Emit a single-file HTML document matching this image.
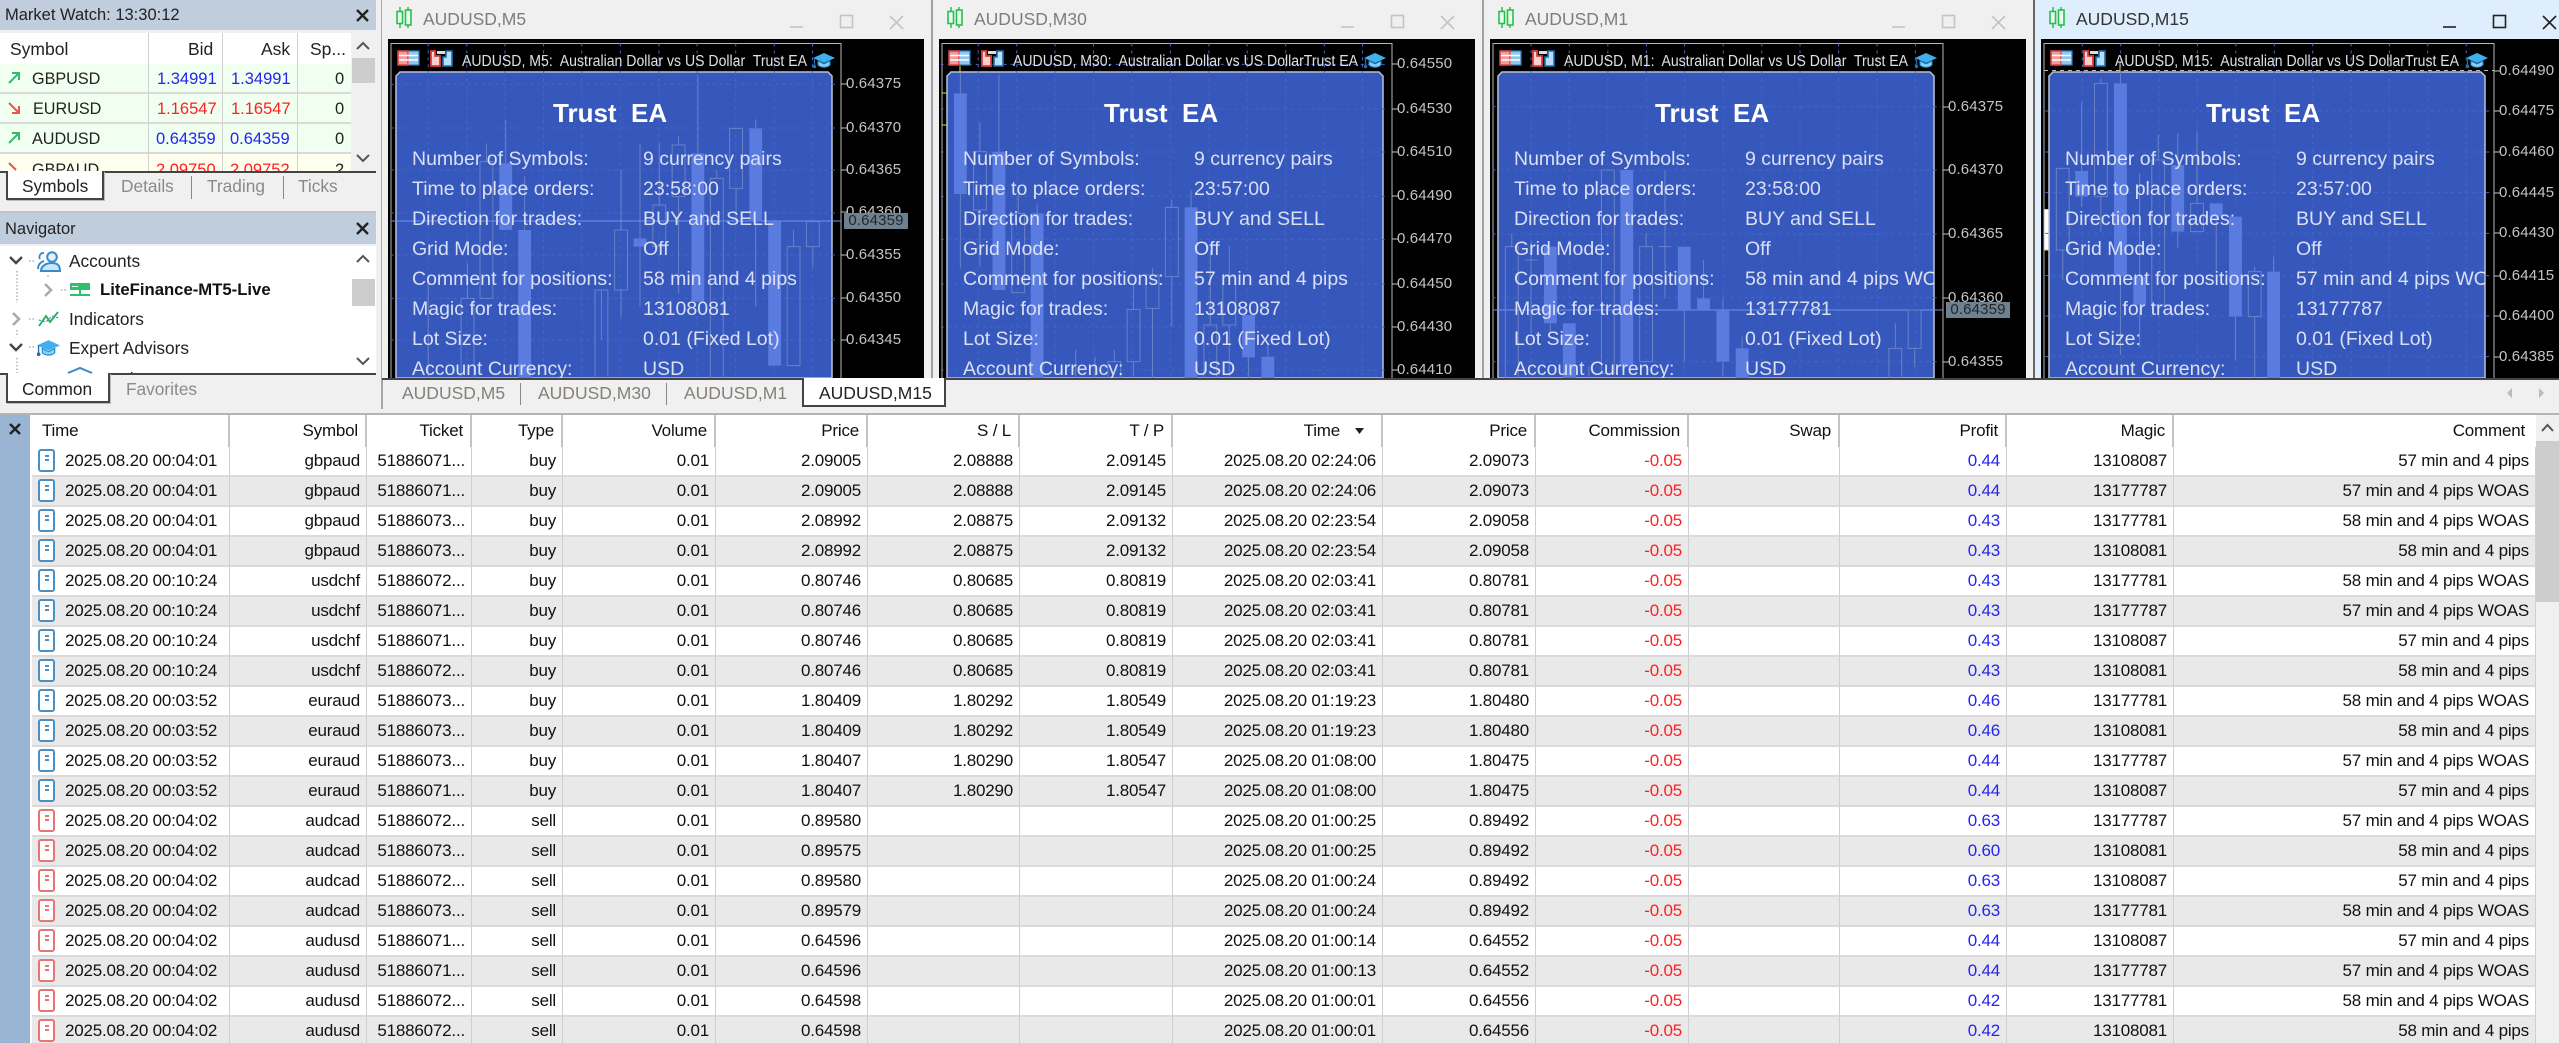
<!DOCTYPE html>
<html><head><meta charset="utf-8"><title>MT5</title>
<style>
*{box-sizing:border-box}
html{background:#f0f0f0}
html,body{margin:0;padding:0;width:2559px;height:1043px;overflow:hidden;font-family:"Liberation Sans",sans-serif;color:#222}
body{background:#f0f0f0;filter:blur(.35px)}
.t{position:absolute;white-space:pre;line-height:20px}
.a{position:absolute}
.tb{background:#bfcddc;left:0;width:376px}
.g1{color:#8a8a8a}
.win{position:absolute;top:0;height:378px;width:549px;overflow:hidden;background:#f0f0f0}
.win .ttl{position:absolute;left:41px;top:9px;font-size:17.5px;line-height:20px;color:#7d7d7d;white-space:pre}
.chart{position:absolute;left:6px;top:39px;width:536px;height:339px;background:#000}
.win svg.c{position:absolute;left:0;top:0}
.tx{position:absolute;left:14px;top:72px;width:436px;height:306px;overflow:hidden;color:#d9e0f3;font-size:19.5px;line-height:24px;white-space:pre}
.tx b{position:absolute;left:157px;top:26px;font-size:26px;line-height:30px;color:#fff}
.tx span{position:absolute}
.l{left:16px}.v{left:247px}
.ax{position:absolute;left:464px;font-size:15px;line-height:18px;color:#c4c4c4;letter-spacing:.15px}
.pb{position:absolute;left:462px;width:64px;height:16px;background:#6f808f;color:#1f262c;font-size:15px;line-height:16px;text-align:center;letter-spacing:.15px}
.vl{position:absolute;top:0;width:2px;height:378px;background:#a0a0a0}
.tbt{position:absolute;top:383px;font-size:17.5px;line-height:20px;color:#85807a;white-space:pre}
table{position:absolute;left:32px;border-collapse:separate;border-spacing:0;table-layout:fixed;width:2504px;font-size:17px;letter-spacing:-.2px;color:#111}
td,th{height:30px;padding:0 6px 0 0;text-align:right;white-space:nowrap;overflow:hidden;border-right:1px solid #cfcfcf;border-bottom:2px solid #dadada;font-weight:normal;line-height:28px;vertical-align:middle}
th{height:32px;padding-right:7px;border-right:2px solid #c4c4c4;border-bottom:0;line-height:32px;background:#fff}
tbody tr:nth-child(odd) td{background:#fff}
tbody tr:nth-child(even) td{background:#e9e9e9}
td.c0{text-align:left;padding-left:33px;position:relative}
i.d{position:absolute;left:6px;top:2px;width:17px;height:23px;border:2px solid #4a90c4;border-radius:3px;background:#fff}
i.d:after{content:"";position:absolute;left:5px;top:4px;width:4px;height:2px;background:#4a90c4;box-shadow:0 4px 0 #4a90c4}
i.r{border-color:#e87474}i.r:after{background:#e87474;box-shadow:0 4px 0 #e87474}
td.n{color:#ff2020}td.p{color:#2424ee}
.h{fill:none;stroke:#6a82c6;stroke-width:1;vector-effect:non-scaling-stroke}
.f{fill:#5a7be0}
.gd{fill:none;stroke:#4767c8;stroke-width:1;stroke-dasharray:3 4;vector-effect:non-scaling-stroke}
</style></head><body>
<svg width="0" height="0" style="position:absolute"><defs>
<symbol id="cd" viewBox="0 0 16 21"><path d="M4 0V21M12 0V21" stroke="#26c04c" stroke-width="1.5"/><rect x="1" y="4.5" width="5.5" height="12" fill="#eafff0" stroke="#26c04c" stroke-width="1.6"/><rect x="9.5" y="3" width="5.5" height="15" fill="#eafff0" stroke="#26c04c" stroke-width="1.6"/></symbol>
<symbol id="tbl" viewBox="0 0 23 16"><rect x="1" y="1" width="21" height="14" fill="#fff" stroke="#1f6fb0" stroke-width="1.4"/><rect x="1" y="1" width="10" height="14" fill="#f59a9a" stroke="#e03c3c" stroke-width="1.4"/><rect x="12" y="2" width="9" height="12" fill="#8cc8f0"/><path d="M2 5.5H21M2 10H21" stroke="#fff" stroke-width="1.5"/></symbol>
<symbol id="fl" viewBox="0 0 23 17"><path d="M1 1H5V6H10V16H1Z" fill="#fbd0d0" stroke="#e03c3c" stroke-width="1.8"/><rect x="7" y="1" width="8" height="3" fill="#ddd"/><path d="M16 1H22V16H13V7H16Z" fill="#b5e0fb" stroke="#1f6fb0" stroke-width="1.6"/></symbol>
<symbol id="hat" viewBox="0 0 22 17"><path d="M0 6L11 1L22 6L11 11Z" fill="#3fb0ec"/><path d="M5 9V13C8 16 14 16 17 13V9L11 12Z" fill="#8ad0f5" stroke="#1d86c8"/><path d="M1.500 6V13" stroke="#1d6fb0" stroke-width="1.300"/><circle cx="1.500" cy="14.500" r="1.800" fill="#1d6fb0"/></symbol>
<symbol id="mn" viewBox="0 0 16 16"><path d="M1 14H14" stroke="currentColor" stroke-width="1.600"/></symbol>
<symbol id="mx" viewBox="0 0 16 16"><rect x="1.500" y="1.500" width="12" height="12" fill="none" stroke="currentColor" stroke-width="1.600"/></symbol>
<symbol id="cl" viewBox="0 0 16 16"><path d="M1 1L14 14M14 1L1 14" stroke="currentColor" stroke-width="1.600"/></symbol>
</defs></svg>

<!-- Market Watch -->
<div class="a tb" style="top:0;height:30px"></div>
<div class="t" style="left:5px;top:5px;font-size:16.5px">Market Watch: 13:30:12</div>
<div class="a" style="left:0;top:33px;width:351px;height:31px;background:#fff"></div>
<div class="a" style="left:0;top:64px;width:351px;height:30px;background:#f1fff1;border-bottom:2px solid #dadada"></div>
<div class="a" style="left:0;top:94px;width:351px;height:30px;background:#f1fff1;border-bottom:2px solid #dadada"></div>
<div class="a" style="left:0;top:124px;width:351px;height:30px;background:#f1fff1;border-bottom:2px solid #dadada"></div>
<div class="a" style="left:0;top:154px;width:351px;height:17px;background:#fffff0"></div>
<div class="a" style="left:148px;top:33px;width:1px;height:138px;background:#d0d0d0"></div>
<div class="a" style="left:222px;top:33px;width:1px;height:138px;background:#d0d0d0"></div>
<div class="a" style="left:297px;top:33px;width:1px;height:138px;background:#d0d0d0"></div>
<div class="t" style="left:10px;top:39px;font-size:17.5px">Symbol</div>
<div class="t" style="left:188px;top:39px;font-size:17.5px">Bid</div>
<div class="t" style="left:261px;top:39px;font-size:17.5px">Ask</div>
<div class="t" style="left:310px;top:39px;font-size:17.5px">Sp...</div>
<div class="t" style="left:32px;top:69px;font-size:16.2px">GBPUSD</div><div class="t" style="left:157px;top:69px;font-size:16.5px;color:#2424ee">1.34991</div><div class="t" style="left:231px;top:69px;font-size:16.5px;color:#2424ee">1.34991</div><div class="t" style="left:335px;top:69px;font-size:16.5px">0</div>
<div class="t" style="left:33px;top:99px;font-size:16.2px">EURUSD</div><div class="t" style="left:157px;top:99px;font-size:16.5px;color:#ff2020">1.16547</div><div class="t" style="left:231px;top:99px;font-size:16.5px;color:#ff2020">1.16547</div><div class="t" style="left:335px;top:99px;font-size:16.5px">0</div>
<div class="t" style="left:32px;top:129px;font-size:16.2px">AUDUSD</div><div class="t" style="left:156px;top:129px;font-size:16.5px;color:#2424ee">0.64359</div><div class="t" style="left:230px;top:129px;font-size:16.5px;color:#2424ee">0.64359</div><div class="t" style="left:335px;top:129px;font-size:16.5px">0</div>
<div class="a" style="left:0;top:154px;width:351px;height:17px;overflow:hidden">
<div class="t" style="left:32px;top:6px;font-size:16.2px">GBPAUD</div><div class="t" style="left:156px;top:6px;font-size:16.5px;color:#ff2020">2.09750</div><div class="t" style="left:230px;top:6px;font-size:16.5px;color:#ff2020">2.09752</div><div class="t" style="left:335px;top:6px;font-size:16.5px">2</div>
</div>
<div class="a" style="left:352px;top:58px;width:23px;height:25px;background:#cdcdcd"></div>
<div class="a" style="left:0;top:171px;width:376px;height:2px;background:#444"></div>
<div class="a" style="left:6px;top:171px;width:98px;height:29px;background:#fff;border:2px solid #444;border-top:0;box-shadow:1px 1px 0 #bbb"></div>
<div class="t" style="left:22px;top:176px;font-size:17.3px">Symbols</div>
<div class="t g1" style="left:121px;top:176px;font-size:17.3px">Details</div>
<div class="a" style="left:191px;top:176px;width:1px;height:23px;background:#888"></div>
<div class="t g1" style="left:207px;top:176px;font-size:17.3px">Trading</div>
<div class="a" style="left:283px;top:176px;width:1px;height:23px;background:#888"></div>
<div class="t g1" style="left:298px;top:176px;font-size:17.3px">Ticks</div>

<!-- Navigator -->
<div class="a" style="left:0;top:211px;width:376px;height:2px;background:#c4c4c4"></div>
<div class="a tb" style="top:213px;height:31px"></div>
<div class="t" style="left:5px;top:219px;font-size:16.5px">Navigator</div>
<div class="a" style="left:0;top:246px;width:376px;height:127px;background:#fff"></div>
<div class="t" style="left:69px;top:251px;font-size:17.3px">Accounts</div>
<div class="t" style="left:100px;top:280px;font-size:16.7px;font-weight:bold;color:#111">LiteFinance-MT5-Live</div>
<div class="t" style="left:69px;top:309px;font-size:17.3px">Indicators</div>
<div class="t" style="left:69px;top:338px;font-size:17.3px">Expert Advisors</div>
<div class="a" style="left:100px;top:366px;width:60px;height:7px;overflow:hidden"><div class="t" style="left:0;top:3px;font-size:17.3px">Market</div></div>
<div class="a" style="left:352px;top:279px;width:23px;height:27px;background:#cdcdcd"></div>
<div class="a" style="left:0;top:373px;width:376px;height:2px;background:#444"></div>
<div class="a" style="left:6px;top:373px;width:104px;height:30px;background:#fff;border:2px solid #444;border-top:0;box-shadow:1px 1px 0 #bbb"></div>
<div class="t" style="left:22px;top:379px;font-size:17.3px">Common</div>
<div class="t g1" style="left:126px;top:379px;font-size:17.3px">Favorites</div>

<svg class="a" style="left:0;top:0" width="381" height="410" fill="none">
<path d="M9 83L19 73M12 73H19V80" stroke="#35b870" stroke-width="2"/>
<path d="M9 103L19 113M19 106V113H12" stroke="#f05050" stroke-width="2"/>
<path d="M9 143L19 133M12 133H19V140" stroke="#35b870" stroke-width="2"/>
<path d="M9 163L16 170" stroke="#f05050" stroke-width="2"/>
<path d="M357 49L363 43L369 49M357 155L363 161L369 155" stroke="#555" stroke-width="2"/>
<path d="M357 262L363 256L369 262M357 358L363 364L369 358" stroke="#555" stroke-width="2"/>
<path d="M357 10L368 21M368 10L357 21M357 223L368 234M368 223L357 234" stroke="#222" stroke-width="2.400"/>
<path d="M10 257L16 263L22 257M10 344L16 350L22 344" stroke="#444" stroke-width="2.400"/>
<path d="M45 284L51 290L45 296" stroke="#aaa" stroke-width="2.600"/>
<path d="M13 313L19 319L13 325" stroke="#aaa" stroke-width="2.600"/>
<path d="M17 271V303M17 330V336M17 358V373M29 261H35M61 290H66M29 319H35M29 347H35M48 275V277" stroke="#888" stroke-dasharray="1.500 2"/>
<circle cx="52" cy="257" r="4.800" fill="#e4f0fa" stroke="#3a8ac8" stroke-width="2"/>
<path d="M40 259a4 4 0 0 1 4-6M38 269c0-5 3-7 6-8" stroke="#3a8ac8" stroke-width="1.800"/>
<path d="M41 271c0-5 5-8 11-8s8 3 8 8Z" fill="#cfe4f5" stroke="#3a8ac8" stroke-width="2"/>
<rect x="70" y="283" width="20" height="7" fill="#2ec06e"/><path d="M72 286.500H78" stroke="#fff"/>
<path d="M80 290V295M70 295H90" stroke="#2ec06e" stroke-width="2"/>
<path d="M39 326L46 316L50 322L58 312" stroke="#24b060" stroke-width="1.900"/>
<path d="M39 320L46 322L52 316L59 318" stroke="#3a8ac8" stroke-width="1.200" stroke-dasharray="2 2"/>
<use href="#hat" x="37" y="339" width="23" height="18"/>
<path d="M68 373L80 368L92 373" stroke="#3a8ac8" stroke-width="2"/>
</svg>
<div class="a" style="left:381px;top:0;width:2px;height:409px;background:#a8a8a8"></div>

<!-- Window 1 -->
<div class="win" style="left:382px"><div class="ttl">AUDUSD,M5</div>
<svg class="a" style="left:14px;top:7px" width="16" height="21"><use href="#cd"/></svg>
<svg class="a" style="left:407px;top:13px;color:#c4c4c4" width="16" height="16"><use href="#mn"/></svg>
<svg class="a" style="left:457px;top:14px;color:#c4c4c4" width="16" height="16"><use href="#mx"/></svg>
<svg class="a" style="left:507px;top:15px;color:#c4c4c4" width="16" height="16"><use href="#cl"/></svg>
<div class="chart"></div>
<svg class="c" width="549" height="378">
<path d="M14 378V76L18 72H446L450 76V378Z" fill="#3657bc" stroke="#b9c2d8" stroke-width="1.500"/>
<path d="M9 378V43.500H459V378" fill="none" stroke="#b8b8b8"/>
<g transform="translate(-2,0) scale(.35714,.33333)">
<path class="gd" d="M135 130V1135M243 130V1135M350 130V1135M458 130V1135M565 130V1135M673 130V1135M781 130V1135M888 130V1135M996 130V1135M1104 130V1135M1211 130V1135M30 253H1285M30 384H1285M30 510H1285M30 639H1285M30 765H1285M30 895H1285M30 1020H1285"/>
<path class="h" d="M245 790V895M298 430V485M352 360V490M405 530V690M620 1020V870M675 510V690M675 870V950M728 430V715M728 740V920M782 430V615M836 408V435M836 590V880M890 225V460M943 510V535M997 565V660M1052 358V385M1052 665V920M1158 690V740M1212 740V800M135 850V1135"/>
<path d="M30 663H1290" stroke="#6f92f2" stroke-width="1" vector-effect="non-scaling-stroke"/>
<rect class="h" x="227" y="895" width="36" height="240"/><rect class="h" x="280" y="485" width="36" height="410"/><rect class="f" x="334" y="490" width="36" height="200"/><rect class="f" x="387" y="690" width="36" height="445"/><rect class="h" x="602" y="870" width="36" height="265"/><rect class="h" x="657" y="690" width="36" height="180"/><rect class="f" x="710" y="715" width="36" height="25"/><rect class="h" x="764" y="615" width="36" height="125"/><rect class="h" x="818" y="435" width="36" height="155"/><rect class="f" x="872" y="460" width="36" height="445"/><rect class="h" x="925" y="535" width="36" height="600"/><rect class="h" x="979" y="385" width="36" height="180"/><rect class="f" x="1034" y="385" width="36" height="280"/><rect class="f" x="1087" y="665" width="36" height="432"/><rect class="h" x="1140" y="740" width="36" height="357"/><rect class="h" x="1194" y="665" width="36" height="75"/>
</g>
<path d="M459 84H466M459 128H466M459 170H466M459 212H466M459 255H466M459 298H466M459 340H466" stroke="#c4c4c4"/>
<use href="#tbl" x="15" y="50" width="23" height="16"/><use href="#fl" x="48" y="50" width="23" height="17"/><use href="#hat" x="431" y="52" width="22" height="17"/>
<text x="80" y="66" fill="#e0e0e0" font-size="15.5" textLength="345" lengthAdjust="spacingAndGlyphs" style="white-space:pre">AUDUSD, M5:  Australian Dollar vs US Dollar  Trust EA</text>
</svg>
<div class="tx"><b>Trust  EA</b>
<span class="l" style="top:75px">Number of Symbols:</span><span class="v" style="top:75px">9 currency pairs</span>
<span class="l" style="top:105px">Time to place orders:</span><span class="v" style="top:105px">23:58:00</span>
<span class="l" style="top:135px">Direction for trades:</span><span class="v" style="top:135px">BUY and SELL</span>
<span class="l" style="top:165px">Grid Mode:</span><span class="v" style="top:165px">Off</span>
<span class="l" style="top:195px">Comment for positions:</span><span class="v" style="top:195px">58 min and 4 pips</span>
<span class="l" style="top:225px">Magic for trades:</span><span class="v" style="top:225px">13108081</span>
<span class="l" style="top:255px">Lot Size:</span><span class="v" style="top:255px">0.01 (Fixed Lot)</span>
<span class="l" style="top:285px">Account Currency:</span><span class="v" style="top:285px">USD</span></div>
<div class="ax" style="top:75px">0.64375</div><div class="ax" style="top:119px">0.64370</div><div class="ax" style="top:161px">0.64365</div><div class="ax" style="top:203px">0.64360</div><div class="ax" style="top:246px">0.64355</div><div class="ax" style="top:289px">0.64350</div><div class="ax" style="top:331px">0.64345</div>
<div class="pb" style="top:213px">0.64359</div>
</div>

<!-- Window 2 -->
<div class="win" style="left:933px"><div class="ttl">AUDUSD,M30</div>
<svg class="a" style="left:14px;top:7px" width="16" height="21"><use href="#cd"/></svg>
<svg class="a" style="left:407px;top:13px;color:#c4c4c4" width="16" height="16"><use href="#mn"/></svg>
<svg class="a" style="left:457px;top:14px;color:#c4c4c4" width="16" height="16"><use href="#mx"/></svg>
<svg class="a" style="left:507px;top:15px;color:#c4c4c4" width="16" height="16"><use href="#cl"/></svg>
<div class="chart"></div>
<svg class="c" width="549" height="378">
<path d="M14 378V76L18 72H446L450 76V378Z" fill="#3657bc" stroke="#b9c2d8" stroke-width="1.500"/>
<path d="M9 378V43.500H459V378" fill="none" stroke="#b8b8b8"/>
<path d="M9 93H14M9 125H14M27 66V72" stroke="#e8e020"/>
<g transform="translate(-3,0) scale(.35714,.33333)">
<path class="gd" d="M135 130V1135M243 130V1135M350 130V1135M458 130V1135M565 130V1135M673 130V1135M781 130V1135M888 130V1135M996 130V1135M1104 130V1135M1211 130V1135M30 193H1285M30 327H1285M30 456H1285M30 589H1285M30 718H1285M30 852H1285M30 981H1285M30 1110H1285"/>
<path class="h" d="M85 220V280M85 582V805M140 368V455M140 630V800M193 225V455M247 580V640M300 610V640M408 1050V1135M462 1070V1135M516 1050V1085M570 850V928M570 1085V1135M623 805V825M623 925V1135M677 600V622M677 830V980M731 570V622M785 750V975M838 740V830M838 975V1135M892 1072V1135M946 1035V1070"/>
<rect class="f" x="67" y="280" width="36" height="302"/><rect class="h" x="122" y="455" width="36" height="175"/><rect class="f" x="175" y="455" width="36" height="415"/><rect class="h" x="229" y="640" width="36" height="238"/><rect class="f" x="282" y="640" width="36" height="495"/><rect class="h" x="498" y="1085" width="36" height="50"/><rect class="h" x="552" y="928" width="36" height="157"/><rect class="h" x="605" y="825" width="36" height="100"/><rect class="h" x="659" y="622" width="36" height="208"/><rect class="f" x="713" y="622" width="36" height="513"/><rect class="h" x="767" y="975" width="36" height="160"/><rect class="h" x="820" y="830" width="36" height="145"/><rect class="f" x="874" y="945" width="36" height="127"/><rect class="f" x="928" y="1070" width="36" height="65"/>
</g>
<path d="M459 64H466M459 109H466M459 152H466M459 196H466M459 239H466M459 284H466M459 327H466M459 370H466" stroke="#c4c4c4"/>
<use href="#tbl" x="15" y="50" width="23" height="16"/><use href="#fl" x="48" y="50" width="23" height="17"/><use href="#hat" x="431" y="52" width="22" height="17"/>
<text x="80" y="66" fill="#e0e0e0" font-size="15.5" textLength="345" lengthAdjust="spacingAndGlyphs" style="white-space:pre">AUDUSD, M30:  Australian Dollar vs US DollarTrust EA</text>
</svg>
<div class="tx"><b>Trust  EA</b>
<span class="l" style="top:75px">Number of Symbols:</span><span class="v" style="top:75px">9 currency pairs</span>
<span class="l" style="top:105px">Time to place orders:</span><span class="v" style="top:105px">23:57:00</span>
<span class="l" style="top:135px">Direction for trades:</span><span class="v" style="top:135px">BUY and SELL</span>
<span class="l" style="top:165px">Grid Mode:</span><span class="v" style="top:165px">Off</span>
<span class="l" style="top:195px">Comment for positions:</span><span class="v" style="top:195px">57 min and 4 pips</span>
<span class="l" style="top:225px">Magic for trades:</span><span class="v" style="top:225px">13108087</span>
<span class="l" style="top:255px">Lot Size:</span><span class="v" style="top:255px">0.01 (Fixed Lot)</span>
<span class="l" style="top:285px">Account Currency:</span><span class="v" style="top:285px">USD</span></div>
<div class="ax" style="top:55px">0.64550</div><div class="ax" style="top:100px">0.64530</div><div class="ax" style="top:143px">0.64510</div><div class="ax" style="top:187px">0.64490</div><div class="ax" style="top:230px">0.64470</div><div class="ax" style="top:275px">0.64450</div><div class="ax" style="top:318px">0.64430</div><div class="ax" style="top:361px">0.64410</div>
</div>

<!-- Window 3 -->
<div class="win" style="left:1484px"><div class="ttl">AUDUSD,M1</div>
<svg class="a" style="left:14px;top:7px" width="16" height="21"><use href="#cd"/></svg>
<svg class="a" style="left:407px;top:13px;color:#c4c4c4" width="16" height="16"><use href="#mn"/></svg>
<svg class="a" style="left:457px;top:14px;color:#c4c4c4" width="16" height="16"><use href="#mx"/></svg>
<svg class="a" style="left:507px;top:15px;color:#c4c4c4" width="16" height="16"><use href="#cl"/></svg>
<div class="chart"></div>
<svg class="c" width="549" height="378">
<path d="M14 378V76L18 72H446L450 76V378Z" fill="#3657bc" stroke="#b9c2d8" stroke-width="1.500"/>
<path d="M9 378V43.500H459V378" fill="none" stroke="#b8b8b8"/>
<g transform="translate(-4,0) scale(.35714,.33333)">
<path class="gd" d="M143 130V1135M250 130V1135M358 130V1135M466 130V1135M573 130V1135M681 130V1135M789 130V1135M896 130V1135M1004 130V1135M1112 130V1135M1219 130V1135M35 320H1290M35 510H1290M35 702H1290M35 893H1290M35 1085H1290"/>
<path class="h" d="M89 700V740M143 725V1000M197 970V1000M305 1100V1135M465 700V740M518 510V895M572 930V1085M626 780V895M680 895V930M680 1085V1135M734 1010V1045M1163 970V1045M1217 1045V1100M500 740H536M125 780H161"/>
<path d="M35 930H1295" stroke="#6f92f2" stroke-width="1" vector-effect="non-scaling-stroke"/>
<rect class="h" x="71" y="740" width="36" height="395"/><rect class="f" x="179" y="740" width="36" height="230"/><rect class="f" x="232" y="970" width="36" height="165"/><rect class="h" x="340" y="510" width="36" height="610"/><rect class="f" x="393" y="510" width="36" height="590"/><rect class="h" x="447" y="740" width="36" height="345"/><rect class="f" x="554" y="740" width="36" height="190"/><rect class="f" x="608" y="895" width="36" height="35"/><rect class="f" x="662" y="930" width="36" height="155"/><rect class="f" x="716" y="1045" width="36" height="90"/><rect class="h" x="1145" y="1045" width="36" height="90"/><rect class="h" x="1199" y="930" width="36" height="115"/>
</g>
<path d="M459 107H466M459 170H466M459 234H466M459 298H466M459 362H466" stroke="#c4c4c4"/>
<use href="#tbl" x="15" y="50" width="23" height="16"/><use href="#fl" x="48" y="50" width="23" height="17"/><use href="#hat" x="431" y="52" width="22" height="17"/>
<text x="80" y="66" fill="#e0e0e0" font-size="15.5" textLength="344" lengthAdjust="spacingAndGlyphs" style="white-space:pre">AUDUSD, M1:  Australian Dollar vs US Dollar  Trust EA</text>
</svg>
<div class="tx"><b>Trust  EA</b>
<span class="l" style="top:75px">Number of Symbols:</span><span class="v" style="top:75px">9 currency pairs</span>
<span class="l" style="top:105px">Time to place orders:</span><span class="v" style="top:105px">23:58:00</span>
<span class="l" style="top:135px">Direction for trades:</span><span class="v" style="top:135px">BUY and SELL</span>
<span class="l" style="top:165px">Grid Mode:</span><span class="v" style="top:165px">Off</span>
<span class="l" style="top:195px">Comment for positions:</span><span class="v" style="top:195px">58 min and 4 pips WOAS</span>
<span class="l" style="top:225px">Magic for trades:</span><span class="v" style="top:225px">13177781</span>
<span class="l" style="top:255px">Lot Size:</span><span class="v" style="top:255px">0.01 (Fixed Lot)</span>
<span class="l" style="top:285px">Account Currency:</span><span class="v" style="top:285px">USD</span></div>
<div class="ax" style="top:98px">0.64375</div><div class="ax" style="top:161px">0.64370</div><div class="ax" style="top:225px">0.64365</div><div class="ax" style="top:289px">0.64360</div><div class="ax" style="top:353px">0.64355</div>
<div class="pb" style="top:302px">0.64359</div>
</div>

<!-- Window 4 -->
<div class="win" style="left:2035px;width:524px;background:#dfeefc"><div class="ttl" style="color:#333">AUDUSD,M15</div>
<svg class="a" style="left:14px;top:7px" width="16" height="21"><use href="#cd"/></svg>
<svg class="a" style="left:407px;top:13px;color:#222" width="16" height="16"><use href="#mn"/></svg>
<svg class="a" style="left:457px;top:14px;color:#222" width="16" height="16"><use href="#mx"/></svg>
<svg class="a" style="left:507px;top:15px;color:#222" width="16" height="16"><use href="#cl"/></svg>
<div class="chart" style="width:518px"></div>
<svg class="c" width="524" height="378">
<rect x="9" y="209" width="5" height="41" fill="#fff"/><path d="M9 209.500H14M9 250H14M85 62V72" stroke="#e8e020"/>
<path d="M9 70.500H459" stroke="#bbb" stroke-dasharray="4 4"/>
<path d="M14 378V76L18 72H446L450 76V378Z" fill="#3657bc" stroke="#b9c2d8" stroke-width="1.500"/>
<path d="M9 378V43.500H459V378" fill="none" stroke="#b8b8b8"/>
<g transform="translate(-5,0) scale(.33738,.33333)">
<path class="gd" d="M155 130V1135M269 130V1135M383 130V1135M496 130V1135M610 130V1135M724 130V1135M838 130V1135M952 130V1135M1065 130V1135M1179 130V1135M1293 130V1135M45 333H1370M45 456H1370M45 578H1370M45 700H1370M45 827H1370M45 948H1370M45 1070H1370"/>
<path class="h" d="M97 750V840M153 305V513M153 590V620M210 235V250M210 590V695M268 216V250M268 830V1065M325 520V830M325 915V1040M380 405V480M438 400V495M438 695V745M495 395V610M552 650V815M609 950V1080M666 800V815M666 950V1135M722 770V815"/>
<rect class="h" x="78" y="505" width="38" height="245"/><rect class="f" x="134" y="513" width="38" height="77"/><rect class="h" x="191" y="250" width="38" height="340"/><rect class="f" x="249" y="250" width="38" height="580"/><rect class="f" x="306" y="830" width="38" height="85"/><rect class="h" x="361" y="480" width="38" height="435"/><rect class="f" x="419" y="495" width="38" height="200"/><rect class="h" x="476" y="610" width="38" height="85"/><rect class="f" x="533" y="610" width="38" height="40"/><rect class="f" x="590" y="650" width="38" height="300"/><rect class="h" x="647" y="815" width="38" height="135"/><rect class="f" x="703" y="815" width="38" height="320"/>
</g>
<path d="M459 71H466M459 111H466M459 152H466M459 193H466M459 233H466M459 276H466M459 316H466M459 357H466" stroke="#c4c4c4"/>
<use href="#tbl" x="15" y="50" width="23" height="16"/><use href="#fl" x="48" y="50" width="23" height="17"/><use href="#hat" x="431" y="52" width="22" height="17"/>
<text x="80" y="66" fill="#e0e0e0" font-size="15.5" textLength="344" lengthAdjust="spacingAndGlyphs" style="white-space:pre">AUDUSD, M15:  Australian Dollar vs US DollarTrust EA</text>
</svg>
<div class="tx"><b>Trust  EA</b>
<span class="l" style="top:75px">Number of Symbols:</span><span class="v" style="top:75px">9 currency pairs</span>
<span class="l" style="top:105px">Time to place orders:</span><span class="v" style="top:105px">23:57:00</span>
<span class="l" style="top:135px">Direction for trades:</span><span class="v" style="top:135px">BUY and SELL</span>
<span class="l" style="top:165px">Grid Mode:</span><span class="v" style="top:165px">Off</span>
<span class="l" style="top:195px">Comment for positions:</span><span class="v" style="top:195px">57 min and 4 pips WOAS</span>
<span class="l" style="top:225px">Magic for trades:</span><span class="v" style="top:225px">13177787</span>
<span class="l" style="top:255px">Lot Size:</span><span class="v" style="top:255px">0.01 (Fixed Lot)</span>
<span class="l" style="top:285px">Account Currency:</span><span class="v" style="top:285px">USD</span></div>
<div class="ax" style="top:62px">0.64490</div><div class="ax" style="top:102px">0.64475</div><div class="ax" style="top:143px">0.64460</div><div class="ax" style="top:184px">0.64445</div><div class="ax" style="top:224px">0.64430</div><div class="ax" style="top:267px">0.64415</div><div class="ax" style="top:307px">0.64400</div><div class="ax" style="top:348px">0.64385</div>
</div>
<div class="vl" style="left:931px"></div>
<div class="vl" style="left:1482px"></div>
<div class="vl" style="left:2033px;background:#666"></div>

<!-- Chart tabs -->
<div class="a" style="left:382px;top:378px;width:2177px;height:2px;background:#444"></div>
<div class="tbt" style="left:402px">AUDUSD,M5</div>
<div class="a" style="left:520px;top:383px;width:1px;height:22px;background:#888"></div>
<div class="tbt" style="left:538px">AUDUSD,M30</div>
<div class="a" style="left:666px;top:383px;width:1px;height:22px;background:#888"></div>
<div class="tbt" style="left:684px">AUDUSD,M1</div>
<div class="a" style="left:802px;top:378px;width:144px;height:29px;background:#fff;border:2px solid #444;border-top:0"></div>
<div class="tbt" style="left:819px;color:#222">AUDUSD,M15</div>
<svg class="a" style="left:2500px;top:385px" width="50" height="16"><path d="M12 3L7 8L12 13ZM39 3L44 8L39 13Z" fill="#bbb"/></svg>

<!-- Bottom -->
<div class="a" style="left:0;top:413px;width:2559px;height:2px;background:#b4b4b4"></div>
<div class="a" style="left:0;top:415px;width:30px;height:628px;background:#9ab5d3"></div>
<div class="a" style="left:30px;top:415px;width:2529px;height:628px;background:#fff"></div>
<svg class="a" style="left:0;top:415px" width="30" height="30"><path d="M10 9L20 19M20 9L10 19" stroke="#222" stroke-width="2.400"/></svg>
<table style="top:415px"><colgroup><col style="width:198px"><col style="width:137px"><col style="width:105px"><col style="width:91px"><col style="width:153px"><col style="width:152px"><col style="width:152px"><col style="width:153px"><col style="width:210px"><col style="width:153px"><col style="width:153px"><col style="width:151px"><col style="width:167px"><col style="width:167px"><col style="width:362px"></colgroup>
<thead><tr><th style="text-align:left;padding-left:10px">Time</th><th>Symbol</th><th>Ticket</th><th>Type</th><th>Volume</th><th>Price</th><th>S / L</th><th>T / P</th><th style="padding-right:41px;position:relative">Time<svg style="position:absolute;right:16px;top:13px" width="10" height="7"><path d="M0 0H9L4.500 6Z" fill="#222"/></svg></th><th>Price</th><th>Commission</th><th>Swap</th><th>Profit</th><th>Magic</th><th style="border-right:0;padding-right:11px">Comment</th></tr></thead>
<tbody>
<tr><td class="c0"><i class="d"></i>2025.08.20 00:04:01</td><td>gbpaud</td><td>51886071...</td><td>buy</td><td>0.01</td><td>2.09005</td><td>2.08888</td><td>2.09145</td><td>2025.08.20 02:24:06</td><td>2.09073</td><td class="n">-0.05</td><td></td><td class="p">0.44</td><td>13108087</td><td>57 min and 4 pips</td></tr>
<tr><td class="c0"><i class="d"></i>2025.08.20 00:04:01</td><td>gbpaud</td><td>51886071...</td><td>buy</td><td>0.01</td><td>2.09005</td><td>2.08888</td><td>2.09145</td><td>2025.08.20 02:24:06</td><td>2.09073</td><td class="n">-0.05</td><td></td><td class="p">0.44</td><td>13177787</td><td>57 min and 4 pips WOAS</td></tr>
<tr><td class="c0"><i class="d"></i>2025.08.20 00:04:01</td><td>gbpaud</td><td>51886073...</td><td>buy</td><td>0.01</td><td>2.08992</td><td>2.08875</td><td>2.09132</td><td>2025.08.20 02:23:54</td><td>2.09058</td><td class="n">-0.05</td><td></td><td class="p">0.43</td><td>13177781</td><td>58 min and 4 pips WOAS</td></tr>
<tr><td class="c0"><i class="d"></i>2025.08.20 00:04:01</td><td>gbpaud</td><td>51886073...</td><td>buy</td><td>0.01</td><td>2.08992</td><td>2.08875</td><td>2.09132</td><td>2025.08.20 02:23:54</td><td>2.09058</td><td class="n">-0.05</td><td></td><td class="p">0.43</td><td>13108081</td><td>58 min and 4 pips</td></tr>
<tr><td class="c0"><i class="d"></i>2025.08.20 00:10:24</td><td>usdchf</td><td>51886072...</td><td>buy</td><td>0.01</td><td>0.80746</td><td>0.80685</td><td>0.80819</td><td>2025.08.20 02:03:41</td><td>0.80781</td><td class="n">-0.05</td><td></td><td class="p">0.43</td><td>13177781</td><td>58 min and 4 pips WOAS</td></tr>
<tr><td class="c0"><i class="d"></i>2025.08.20 00:10:24</td><td>usdchf</td><td>51886071...</td><td>buy</td><td>0.01</td><td>0.80746</td><td>0.80685</td><td>0.80819</td><td>2025.08.20 02:03:41</td><td>0.80781</td><td class="n">-0.05</td><td></td><td class="p">0.43</td><td>13177787</td><td>57 min and 4 pips WOAS</td></tr>
<tr><td class="c0"><i class="d"></i>2025.08.20 00:10:24</td><td>usdchf</td><td>51886071...</td><td>buy</td><td>0.01</td><td>0.80746</td><td>0.80685</td><td>0.80819</td><td>2025.08.20 02:03:41</td><td>0.80781</td><td class="n">-0.05</td><td></td><td class="p">0.43</td><td>13108087</td><td>57 min and 4 pips</td></tr>
<tr><td class="c0"><i class="d"></i>2025.08.20 00:10:24</td><td>usdchf</td><td>51886072...</td><td>buy</td><td>0.01</td><td>0.80746</td><td>0.80685</td><td>0.80819</td><td>2025.08.20 02:03:41</td><td>0.80781</td><td class="n">-0.05</td><td></td><td class="p">0.43</td><td>13108081</td><td>58 min and 4 pips</td></tr>
<tr><td class="c0"><i class="d"></i>2025.08.20 00:03:52</td><td>euraud</td><td>51886073...</td><td>buy</td><td>0.01</td><td>1.80409</td><td>1.80292</td><td>1.80549</td><td>2025.08.20 01:19:23</td><td>1.80480</td><td class="n">-0.05</td><td></td><td class="p">0.46</td><td>13177781</td><td>58 min and 4 pips WOAS</td></tr>
<tr><td class="c0"><i class="d"></i>2025.08.20 00:03:52</td><td>euraud</td><td>51886073...</td><td>buy</td><td>0.01</td><td>1.80409</td><td>1.80292</td><td>1.80549</td><td>2025.08.20 01:19:23</td><td>1.80480</td><td class="n">-0.05</td><td></td><td class="p">0.46</td><td>13108081</td><td>58 min and 4 pips</td></tr>
<tr><td class="c0"><i class="d"></i>2025.08.20 00:03:52</td><td>euraud</td><td>51886073...</td><td>buy</td><td>0.01</td><td>1.80407</td><td>1.80290</td><td>1.80547</td><td>2025.08.20 01:08:00</td><td>1.80475</td><td class="n">-0.05</td><td></td><td class="p">0.44</td><td>13177787</td><td>57 min and 4 pips WOAS</td></tr>
<tr><td class="c0"><i class="d"></i>2025.08.20 00:03:52</td><td>euraud</td><td>51886071...</td><td>buy</td><td>0.01</td><td>1.80407</td><td>1.80290</td><td>1.80547</td><td>2025.08.20 01:08:00</td><td>1.80475</td><td class="n">-0.05</td><td></td><td class="p">0.44</td><td>13108087</td><td>57 min and 4 pips</td></tr>
<tr><td class="c0"><i class="d r"></i>2025.08.20 00:04:02</td><td>audcad</td><td>51886072...</td><td>sell</td><td>0.01</td><td>0.89580</td><td></td><td></td><td>2025.08.20 01:00:25</td><td>0.89492</td><td class="n">-0.05</td><td></td><td class="p">0.63</td><td>13177787</td><td>57 min and 4 pips WOAS</td></tr>
<tr><td class="c0"><i class="d r"></i>2025.08.20 00:04:02</td><td>audcad</td><td>51886073...</td><td>sell</td><td>0.01</td><td>0.89575</td><td></td><td></td><td>2025.08.20 01:00:25</td><td>0.89492</td><td class="n">-0.05</td><td></td><td class="p">0.60</td><td>13108081</td><td>58 min and 4 pips</td></tr>
<tr><td class="c0"><i class="d r"></i>2025.08.20 00:04:02</td><td>audcad</td><td>51886072...</td><td>sell</td><td>0.01</td><td>0.89580</td><td></td><td></td><td>2025.08.20 01:00:24</td><td>0.89492</td><td class="n">-0.05</td><td></td><td class="p">0.63</td><td>13108087</td><td>57 min and 4 pips</td></tr>
<tr><td class="c0"><i class="d r"></i>2025.08.20 00:04:02</td><td>audcad</td><td>51886073...</td><td>sell</td><td>0.01</td><td>0.89579</td><td></td><td></td><td>2025.08.20 01:00:24</td><td>0.89492</td><td class="n">-0.05</td><td></td><td class="p">0.63</td><td>13177781</td><td>58 min and 4 pips WOAS</td></tr>
<tr><td class="c0"><i class="d r"></i>2025.08.20 00:04:02</td><td>audusd</td><td>51886071...</td><td>sell</td><td>0.01</td><td>0.64596</td><td></td><td></td><td>2025.08.20 01:00:14</td><td>0.64552</td><td class="n">-0.05</td><td></td><td class="p">0.44</td><td>13108087</td><td>57 min and 4 pips</td></tr>
<tr><td class="c0"><i class="d r"></i>2025.08.20 00:04:02</td><td>audusd</td><td>51886071...</td><td>sell</td><td>0.01</td><td>0.64596</td><td></td><td></td><td>2025.08.20 01:00:13</td><td>0.64552</td><td class="n">-0.05</td><td></td><td class="p">0.44</td><td>13177787</td><td>57 min and 4 pips WOAS</td></tr>
<tr><td class="c0"><i class="d r"></i>2025.08.20 00:04:02</td><td>audusd</td><td>51886072...</td><td>sell</td><td>0.01</td><td>0.64598</td><td></td><td></td><td>2025.08.20 01:00:01</td><td>0.64556</td><td class="n">-0.05</td><td></td><td class="p">0.42</td><td>13177781</td><td>58 min and 4 pips WOAS</td></tr>
<tr><td class="c0"><i class="d r"></i>2025.08.20 00:04:02</td><td>audusd</td><td>51886072...</td><td>sell</td><td>0.01</td><td>0.64598</td><td></td><td></td><td>2025.08.20 01:00:01</td><td>0.64556</td><td class="n">-0.05</td><td></td><td class="p">0.42</td><td>13108081</td><td>58 min and 4 pips</td></tr>
</tbody></table>
<div class="a" style="left:2536px;top:415px;width:23px;height:628px;background:#f0f0f0"></div>
<div class="a" style="left:2536px;top:441px;width:23px;height:161px;background:#cdcdcd"></div>
<svg class="a" style="left:2536px;top:420px" width="23" height="16"><path d="M6 11L11.500 5L17 11" fill="none" stroke="#555" stroke-width="2"/></svg>
</body></html>
